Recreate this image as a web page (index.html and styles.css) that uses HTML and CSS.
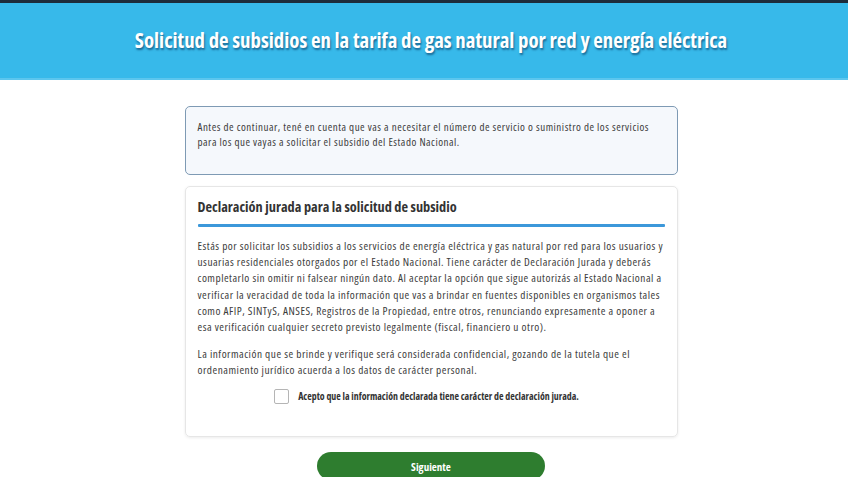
FILE: index.html
```html
<!DOCTYPE html>
<html lang="es">
<head>
<meta charset="utf-8">
<title>Solicitud de subsidios</title>
<link rel="stylesheet" href="styles.css">
</head>
<body>
<div class="topstrip"></div>
<header class="hero">
  <h1 class="hero-title">Solicitud de subsidios en la tarifa de gas natural por red y energía eléctrica</h1>
</header>
<main class="page">
  <div class="column">
    <div class="notice">
      <p>Antes de continuar, tené en cuenta que vas a necesitar el número de servicio o suministro de los servicios<br>para los que vayas a solicitar el subsidio del Estado Nacional.</p>
    </div>
    <section class="card">
      <h2 class="card-title">Declaración jurada para la solicitud de subsidio</h2>
      <div class="rule"></div>
      <p class="text">Estás por solicitar los subsidios a los servicios de energía eléctrica y gas natural por red para los usuarios y<br>usuarias residenciales otorgados por el Estado Nacional. Tiene carácter de Declaración Jurada y deberás<br>completarlo sin omitir ni falsear ningún dato. Al aceptar la opción que sigue autorizás al Estado Nacional a<br>verificar la veracidad de toda la información que vas a brindar en fuentes disponibles en organismos tales<br>como AFIP, SINTyS, ANSES, Registros de la Propiedad, entre otros, renunciando expresamente a oponer a<br>esa verificación cualquier secreto previsto legalmente (fiscal, financiero u otro).</p>
      <p class="text">La información que se brinde y verifique será considerada confidencial, gozando de la tutela que el<br>ordenamiento jurídico acuerda a los datos de carácter personal.</p>
      <label class="accept">
        <span class="box"></span>
        <span class="accept-text">Acepto que la información declarada tiene carácter de declaración jurada.</span>
      </label>
    </section>
    <div class="actions">
      <button class="btn" type="button">Siguiente</button>
    </div>
  </div>
</main>
</body>
</html>
```
FILE: styles.css
```css
html, body {
  margin: 0;
  padding: 0;
  background: #ffffff;
  font-family: "Open Sans", "Liberation Sans", sans-serif;
  font-stretch: 75%;
  color: #3a3a3a;
  overflow: hidden;
}
.topstrip {
  height: 3px;
  background: #1d2c3b;
}
.hero {
  box-sizing: border-box;
  height: 77px;
  background: #37b9ea;
  border-bottom: 2px solid #5cc6ee;
  display: flex;
  align-items: center;
  justify-content: center;
  padding-left: 14px;
  padding-bottom: 1px;
}
.hero-title {
  margin: 0;
  color: #ffffff;
  font-family: "Open Sans", "DejaVu Sans Condensed", sans-serif;
  font-stretch: 75%;
  font-weight: 700;
  font-size: 20.8px;
  white-space: nowrap;
  text-shadow: 1px 2px 2px rgba(0, 40, 80, 0.55);
}
.page {
  display: flex;
  justify-content: center;
  padding-left: 14px;
  padding-top: 26px;
}
.column {
  width: 493px;
  display: flex;
  flex-direction: column;
}
.notice {
  box-sizing: border-box;
  height: 69px;
  border: 1px solid #7e9ab4;
  border-radius: 5px;
  background: #f5f8fc;
  padding: 12px 12px 0 12px;
}
.notice p {
  margin: 0;
  font-size: 11px;
  letter-spacing: 0.52px;
  line-height: 15px;
  color: #3d3d3d;
  white-space: nowrap;
}
.card {
  margin-top: 11px;
  box-sizing: border-box;
  height: 251px;
  border: 1px solid #e6e6e6;
  border-radius: 5px;
  box-shadow: 0 1px 3px rgba(0, 0, 0, 0.08);
  padding: 11px 12px 0 12px;
}
.card-title {
  margin: 0;
  font-size: 14.3px;
  font-weight: 700;
  line-height: 18px;
  color: #333333;
}
.rule {
  margin-top: 8px;
  height: 3px;
  background: #3c98da;
  border-radius: 1px;
}
.text {
  margin: 11px 0 0 0;
  font-size: 11.3px;
  letter-spacing: 0.5px;
  line-height: 16.2px;
  color: #3d3d3d;
  white-space: nowrap;
}
.text + .text {
  margin-top: 11px;
}
.accept {
  margin-top: 10px;
  display: flex;
  align-items: center;
  justify-content: center;
  gap: 9px;
  padding-right: 9px;
}
.box {
  width: 13px;
  height: 13px;
  border: 1px solid #b5b5b5;
  border-radius: 2px;
  background: #ffffff;
}
.accept-text {
  font-size: 9.9px;
  font-weight: 700;
  color: #333333;
}
.actions {
  display: flex;
  justify-content: center;
  padding-top: 15px;
}
.btn {
  width: 228px;
  height: 28px;
  border: none;
  border-radius: 14px;
  background: #2e7d2f;
  color: #ffffff;
  font-family: "Open Sans", "Liberation Sans", sans-serif;
  font-stretch: 75%;
  font-weight: 700;
  font-size: 11px;
  padding: 0;
}
```
